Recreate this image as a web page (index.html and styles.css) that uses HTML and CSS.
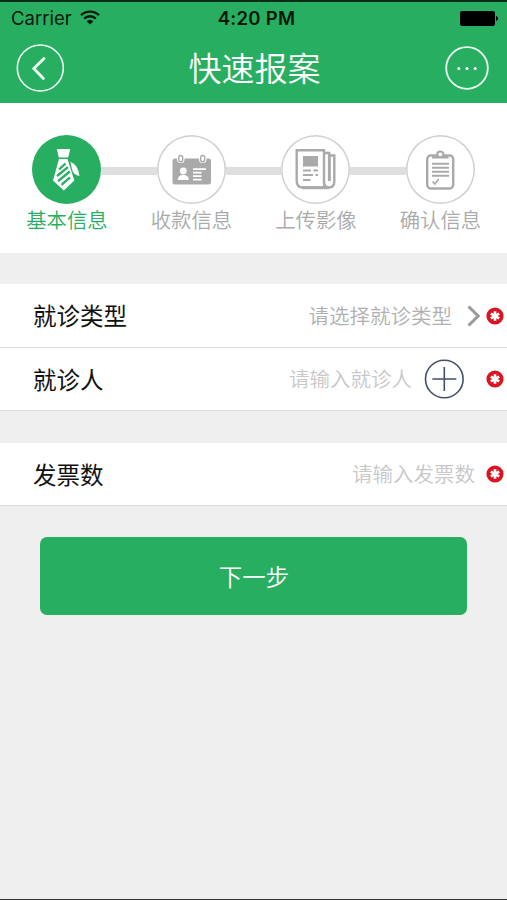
FILE: index.html
```html
<!DOCTYPE html>
<html lang="zh-CN">
<head>
<meta charset="utf-8">
<meta name="viewport" content="width=device-width">
<title>快速报案</title>
<link rel="stylesheet" href="styles.css">
</head>
<body>
<header class="header">
  <div class="status">
    <div class="carrier"><span>Carrier</span>
      <svg width="20" height="15" viewBox="0 0 20 15"><g fill="none" stroke="#04180c" stroke-width="2.3"><path d="M1 5.2a13 13 0 0 1 18 0"/><path d="M4.2 8.6a8.3 8.3 0 0 1 11.6 0"/></g><path d="M6.7 11.2a4.800 4.800 0 0 1 6.600 0L10 14.500z" fill="#04180c"/></svg>
    </div>
    <span class="time">4:20 PM</span>
    <svg class="battery" width="39" height="15" viewBox="0 0 39 15"><rect width="35" height="15" rx="2"/><path d="M36 5q2.2.6 2.2 2.5T36 10z"/></svg>
  </div>
  <div class="nav">
    <svg width="48" height="48" viewBox="0 0 48 48" fill="none" stroke="#eefff4"><circle cx="24.300" cy="24" r="23" stroke-width="1.6"/><path d="M28 14.5L17.8 24.5L27.4 34.5" stroke-width="2.8" stroke-linecap="round"/></svg>
    <h1>快速报案</h1>
    <svg class="more" width="44" height="44" viewBox="0 0 44 44"><circle cx="22" cy="22" r="20.8" fill="none" stroke="#eefff4" stroke-width="1.8"/><g fill="#fff"><circle cx="13.8" cy="22.5" r="1.5"/><circle cx="22" cy="22.5" r="1.5"/><circle cx="30.2" cy="22.5" r="1.5"/></g></svg>
  </div>
</header>

<ol class="steps">
  <li class="step active">
    <span class="disc"><svg width="69" height="69" viewBox="0 0 69 69"><path d="M24.800 14h13.400l-2 8.500h-9.400z" fill="#fff"/><path d="M27 24h8.500l6.800 21.500-10.500 10-10.800-10z" fill="#fff"/><g stroke="#27ae60" stroke-width="2.300"><path d="M27 34.500l6.500-6M25 41l11-8.800M26 46.200l11.800-9.700M29.500 49.800l8.500-7.500"/></g><path d="M38.300 26.800q8 3.200 9.200 14.200-5.500-1-7.200-5.500z" fill="#fff"/></svg></span>
    <span class="name">基本信息</span>
  </li>
  <li class="step">
    <span class="disc"><svg width="69" height="69" viewBox="0 0 69 69"><rect x="15.500" y="23.500" width="38.500" height="26" rx="2.500" fill="#aaa"/><g fill="#fff"><rect x="20" y="19" width="7.500" height="9" rx="3.500"/><rect x="42" y="19" width="7.500" height="9" rx="3.500"/></g><g fill="none" stroke="#aaa" stroke-width="1.400"><rect x="21.700" y="20.500" width="4" height="6.200" rx="2"/><rect x="43.700" y="20.500" width="4" height="6.200" rx="2"/></g><circle cx="26.300" cy="36" r="3.400" fill="#fff"/><path d="M20.800 45q0-5 5.500-5t5.500 5z" fill="#fff"/><path d="M36 34.200h13M36 37.700h8.500M36 41.200h8.500M36 44.700h8.500" stroke="#fff" stroke-width="1.700"/></svg></span>
    <span class="name">收款信息</span>
  </li>
  <li class="step">
    <span class="disc"><svg width="69" height="69" viewBox="0 0 69 69"><g fill="none" stroke="#aaa" stroke-width="2.400"><path d="M15.700 15.200h27.300V47q0 5.500 4 5.500H22q-6.300 0-6.300-6.500z"/><path d="M43 18h5.300V46M48.300 20.500h5V46.500q0 6-5.300 6-5 0-5-5"/></g><path d="M48.300 20v26" stroke="#aaa" stroke-width="2.800"/><path d="M21 52.700h27" stroke="#aaa" stroke-width="3"/><rect x="22" y="21" width="15" height="10.500" fill="#aaa"/><path d="M22 35.500h8M32.500 35.500h4.500M22 40h10M34.500 40h2.500M22 45h7.500" stroke="#aaa" stroke-width="2.200"/></svg></span>
    <span class="name">上传影像</span>
  </li>
  <li class="step">
    <span class="disc"><svg width="69" height="69" viewBox="0 0 69 69"><rect x="21.200" y="20.500" width="26" height="33" rx="3.500" fill="none" stroke="#aaa" stroke-width="2.400"/><path d="M26 23.500v-3.500h4q0-4.500 4.300-4.500t4.300 4.500h4v3.500z" fill="#aaa"/><circle cx="34.300" cy="19.300" r="1.900" fill="#fff"/><path d="M26 28.700h17M26 32.700h17M26 36.700h17M26 40.700h17" stroke="#aaa" stroke-width="1.900"/><path d="M26.500 46.500l2.300 2.500 4-5" fill="none" stroke="#aaa" stroke-width="1.700"/></svg></span>
    <span class="name">确认信息</span>
  </li>
</ol>

<main>
  <section class="group">
    <div class="row">
      <label>就诊类型</label><span class="value picked">请选择就诊类型</span>
      <svg class="chevron" width="14" height="22" viewBox="0 0 14 22" fill="none" stroke="#999" stroke-width="3"><path d="M1.500 1.500l9.700 9.500L1.500 20.500"/></svg>
      <svg class="required" width="18" height="18" viewBox="0 0 18 18"><circle cx="9" cy="9" r="8.600" fill="#dc1422"/><path d="M9 4.200v9.600M4.800 6.600l8.400 4.800M13.200 6.600l-8.400 4.800" stroke="#fff" stroke-width="2.700"/></svg>
    </div>
    <div class="row">
      <label>就诊人</label><span class="value">请输入就诊人</span>
      <svg class="add" width="40" height="40" viewBox="0 0 40 40" fill="none" stroke="#42506a" stroke-width="1.600"><circle cx="20.300" cy="20" r="18.800"/><path d="M8.300 20h24M20.300 8v24"/></svg>
      <svg class="required" width="18" height="18" viewBox="0 0 18 18"><circle cx="9" cy="9" r="8.600" fill="#dc1422"/><path d="M9 4.200v9.600M4.800 6.600l8.400 4.800M13.200 6.600l-8.400 4.800" stroke="#fff" stroke-width="2.700"/></svg>
    </div>
  </section>
  <section class="group">
    <div class="row">
      <label>发票数</label><span class="value">请输入发票数</span>
      <svg class="required" width="18" height="18" viewBox="0 0 18 18"><circle cx="9" cy="9" r="8.600" fill="#dc1422"/><path d="M9 4.200v9.600M4.800 6.600l8.400 4.800M13.200 6.600l-8.400 4.800" stroke="#fff" stroke-width="2.700"/></svg>
    </div>
  </section>
  <button class="next">下一步</button>
</main>
</body>
</html>
```

FILE: styles.css
```css
* { box-sizing: border-box; }
body {
  margin: 0;
  height: 900px;
  background: #efefef;
  border-bottom: 1px solid #333;
  font-family: Inter, "Noto Sans CJK SC", sans-serif;
  font-weight: 350;
  overflow: hidden;
}
svg { display: block; flex: none; }
.header {
  height: 102.500px;
  background: #27ae60;
  border-top: 2px solid #062b16;
}
.status {
  display: grid;
  grid-template-columns: 1fr auto 1fr;
  align-items: center;
  height: 32px;
  padding: 0 8px 0 11px;
  color: #04180c;
  font-size: 18.500px;
  font-weight: 400;
}
.carrier { display: flex; align-items: center; gap: 8px; }
.carrier svg { margin-bottom: 2px; }
.time { padding-left: 3px; font-weight: 600; letter-spacing: .3px; }
.battery { justify-self: end; fill: #000; }
.nav {
  display: flex;
  align-items: center;
  justify-content: space-between;
  height: 68px;
  padding: 0 18px 0 16px;
}
h1 {
  margin: 0;
  padding-top: 2px;
  color: #fff;
  font-size: 33px;
  font-weight: 350;
  line-height: 48px;
}
.steps {
  display: flex;
  height: 150.500px;
  margin: 0;
  padding: 32px 4.300px 0 4.700px;
  background: #fff;
  list-style: none;
}
.step {
  position: relative;
  flex: 1;
  display: flex;
  flex-direction: column;
  align-items: center;
  color: #aaa;
}
.step + .step::before {
  content: "";
  position: absolute;
  top: 32px;
  right: calc(50% + 34px);
  width: 56px;
  height: 8px;
  background: #dfdfdf;
}
.disc {
  width: 69px;
  height: 69px;
  border-radius: 50%;
  box-shadow: inset 0 0 0 1.500px #d0d0d0;
}
.active .disc { background: #27ae60; box-shadow: none; }
.active { color: #27ae60; }
.name { margin-top: 1px; font-size: 20.400px; line-height: 32px; white-space: nowrap; }
.group {
  margin-top: 31px;
  background: #fff;
}
.group + .group { margin-top: 32px; }
.row {
  display: flex;
  align-items: center;
  height: 63px;
  padding: 0 3px 0 33px;
  border-bottom: 1px solid #dcdcdc;
}
.row:first-child:not(:last-child) { height: 64px; }
label { padding-top: 3px; color: #111; font-size: 23.500px; font-weight: 400; line-height: 34px; }
.value { margin-left: auto; padding-top: 2px; color: #c8c8c8; font-size: 20.500px; line-height: 30px; }
.picked { color: #b0b0b0; }
.chevron { margin-left: 15px; }
.add { margin-left: 12px; }
.required { margin-left: 11px; }
.chevron + .required { margin-left: 5px; }
.add + .required { margin-left: 22px; }
.next {
  display: block;
  width: 427px;
  height: 78px;
  margin: 31px auto 0;
  padding: 0 0 0 1px;
  border: 0;
  border-radius: 7px;
  background: #27ae60;
  color: #fff;
  font: 350 23.500px/34px "Noto Sans CJK SC", sans-serif;
}
```
